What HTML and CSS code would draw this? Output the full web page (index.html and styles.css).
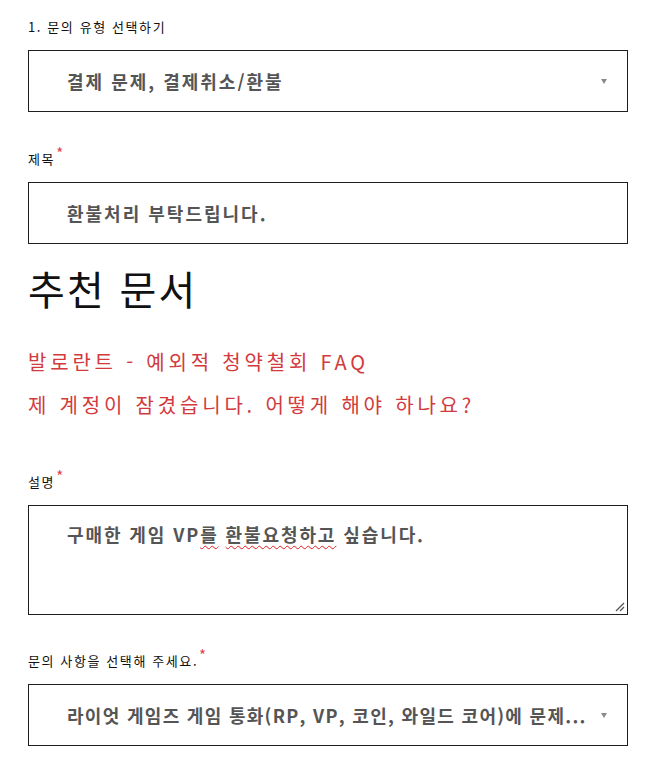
FILE: index.html
```html
<!DOCTYPE html>
<html lang="ko">
<head>
<meta charset="utf-8">
<title>문의</title>
<link rel="stylesheet" href="styles.css">
</head>
<body>
<div class="page">
  <div class="field field-first">
    <div class="label">1. 문의 유형 선택하기</div>
    <div class="box select">
      <span class="value">결제 문제, 결제취소/환불</span>
      <span class="arrow"></span>
    </div>
  </div>

  <div class="field">
    <div class="label">제목<span class="req">*</span></div>
    <div class="box input">
      <span class="value">환불처리 부탁드립니다.</span>
    </div>
  </div>

  <h2 class="heading">추천 문서</h2>
  <div class="links">
    <a class="doc-link" href="#">발로란트 - 예외적 청약철회 FAQ</a>
    <a class="doc-link" href="#">제 계정이 잠겼습니다. 어떻게 해야 하나요?</a>
  </div>

  <div class="field field-desc">
    <div class="label">설명<span class="req">*</span></div>
    <div class="box textarea">
      <span class="value value-area">구매한 게임 VP<span class="spell">를</span> <span class="spell">환불요청하고</span> 싶습니다.</span>
      <svg class="grip" width="10" height="10" viewBox="0 0 10 10">
        <line x1="1" y1="9" x2="9" y2="1" stroke="#555" stroke-width="1.2"/>
        <line x1="5" y1="9" x2="9" y2="5" stroke="#555" stroke-width="1.2"/>
      </svg>
    </div>
  </div>

  <div class="field field-last">
    <div class="label">문의 사항을 선택해 주세요.<span class="req">*</span></div>
    <div class="box select">
      <span class="value value-clip">라이엇 게임즈 게임 통화(RP, VP, 코인, 와일드 코어)에 문제...</span>
      <span class="arrow"></span>
    </div>
  </div>
</div>
</body>
</html>
```

FILE: styles.css
```css
* {
  box-sizing: border-box;
}

html, body {
  margin: 0;
  padding: 0;
  background: #ffffff;
}

body {
  font-family: "Noto Sans CJK KR", "Liberation Sans", sans-serif;
  color: #111111;
}

.page {
  width: 656px;
  padding: 19px 28px 0 28px;
}

.field {
  display: flex;
  flex-direction: column;
  margin-top: 39px;
}

.field-first {
  margin-top: 0;
}

.field-desc {
  margin-top: 48px;
}

.field-last {
  margin-top: 38px;
}

.label {
  font-size: 13px;
  line-height: 16px;
  letter-spacing: 1.6px;
  color: #111111;
  margin-bottom: 15px;
}

.req {
  color: #e8404c;
  font-size: 15px;
  line-height: 10px;
  margin-left: 1px;
  position: relative;
  top: -5px;
}

.box {
  width: 600px;
  border: 1px solid #1e1e1e;
  display: flex;
  align-items: center;
  padding-left: 38px;
  position: relative;
  background: #ffffff;
}

.select, .input {
  height: 62px;
}

.select {
  padding-right: 40px;
}

.textarea {
  height: 110px;
  align-items: flex-start;
  padding-top: 15px;
}

.value {
  font-size: 18px;
  font-weight: 700;
  color: #555555;
  letter-spacing: 2px;
  line-height: 26px;
  white-space: nowrap;
}

.value-area {
  letter-spacing: 1.9px;
}

.value-clip {
  letter-spacing: 1.3px;
  overflow: hidden;
  text-overflow: ellipsis;
}

.spell {
  text-decoration: underline wavy #e02020;
  text-decoration-thickness: 1px;
  text-underline-offset: 3px;
}

.arrow {
  position: absolute;
  right: 20px;
  top: 28px;
  width: 0;
  height: 0;
  border-left: 3px solid transparent;
  border-right: 3px solid transparent;
  border-top: 5px solid #8a8a8a;
}

.grip {
  position: absolute;
  right: 2px;
  bottom: 2px;
}

.heading {
  font-size: 40px;
  font-weight: 400;
  line-height: 48px;
  margin: 20px 0 0 0;
  letter-spacing: 2.2px;
  color: #111111;
}

.links {
  display: flex;
  flex-direction: column;
  margin-top: 28px;
}

.doc-link {
  font-size: 20px;
  line-height: 43px;
  color: #d23a3e;
  text-decoration: none;
  letter-spacing: 3.8px;
}
```
